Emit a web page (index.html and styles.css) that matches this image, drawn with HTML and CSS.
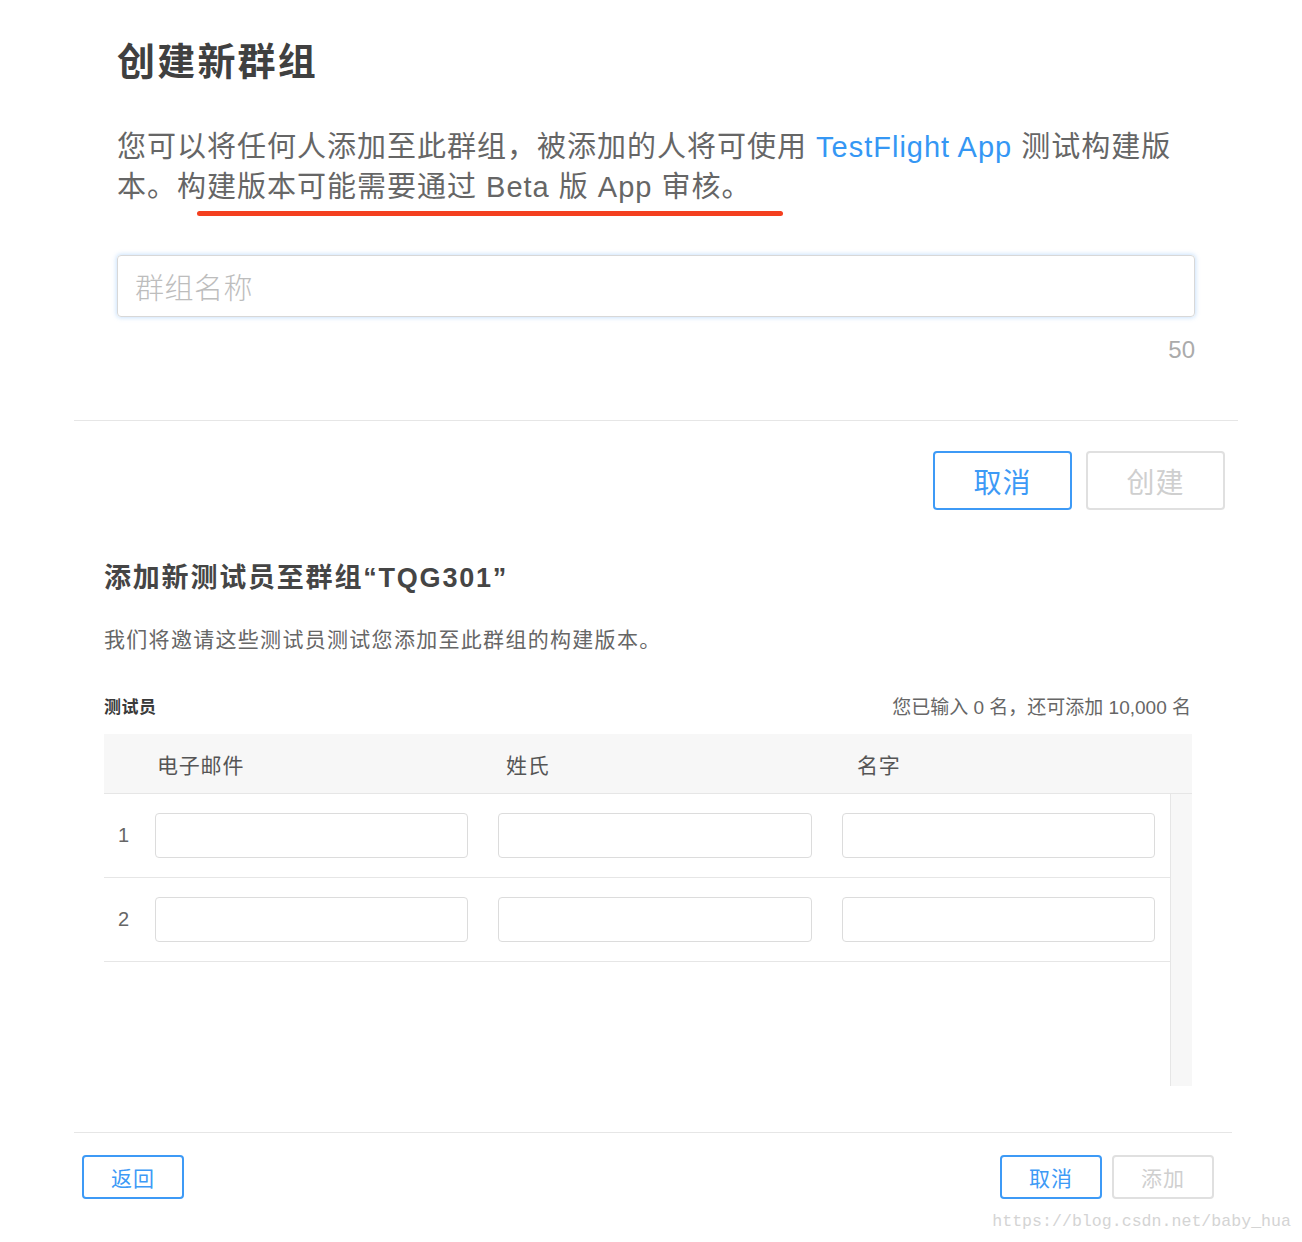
FILE: index.html
```html
<!DOCTYPE html>
<html lang="zh-CN">
<head>
<meta charset="utf-8">
<title>创建新群组</title>
<link rel="stylesheet" href="styles.css">
</head>
<body>
<div class="page">
  <section class="create">
    <h1 class="title">创建新群组</h1>
    <div class="intro-wrap">
      <p class="intro">您可以将任何人添加至此群组，被添加的人将可使用 <span class="link">TestFlight App</span> 测试构建版本。构建版本可能需要通过 Beta 版 App 审核。</p>
      <span class="mark"></span>
    </div>
    <div class="name-input"><span class="placeholder">群组名称</span></div>
    <div class="counter">50</div>
  </section>

  <hr class="divider divider-top">

  <div class="actions actions-top">
    <button class="btn btn-primary btn-lg">取消</button>
    <button class="btn btn-disabled btn-lg">创建</button>
  </div>

  <section class="testers">
    <h2 class="subtitle">添加新测试员至群组“TQG301”</h2>
    <p class="desc">我们将邀请这些测试员测试您添加至此群组的构建版本。</p>
    <div class="list-head">
      <span class="label">测试员</span>
      <span class="quota">您已输入 0 名，还可添加 10,000 名</span>
    </div>
    <div class="table">
      <div class="thead">
        <span class="th th-email">电子邮件</span>
        <span class="th th-last">姓氏</span>
        <span class="th th-first">名字</span>
      </div>
      <div class="tbody">
        <div class="rows">
          <div class="row">
            <span class="num">1</span>
            <div class="fields"><span class="field"></span><span class="field f-mid"></span><span class="field"></span></div>
          </div>
          <div class="row">
            <span class="num">2</span>
            <div class="fields"><span class="field"></span><span class="field f-mid"></span><span class="field"></span></div>
          </div>
        </div>
        <div class="scrolltrack"></div>
      </div>
    </div>
  </section>

  <hr class="divider divider-bottom">

  <div class="footer">
    <button class="btn btn-primary btn-sm">返回</button>
    <div class="footer-right">
      <button class="btn btn-primary btn-sm">取消</button>
      <button class="btn btn-disabled btn-sm">添加</button>
    </div>
  </div>

  <div class="watermark">https://blog.csdn.net/baby_hua</div>
</div>
</body>
</html>
```

FILE: styles.css
```css
* { box-sizing: border-box; }
html, body { margin: 0; padding: 0; background: #fff; }
body {
  font-family: "Liberation Sans", "Noto Sans CJK SC", sans-serif;
  color: #333;
}
.page {
  position: relative;
  width: 1302px;
  height: 1242px;
  overflow: hidden;
}

/* ---- create group ---- */
.create {
  padding: 38px 0 0 117px;
  width: 1195px;
}
.title {
  margin: 0;
  font-size: 38px;
  line-height: 48px;
  font-weight: 700;
  letter-spacing: 2.2px;
  color: #404040;
}
.intro-wrap {
  position: relative;
  margin-top: 41px;
}
.intro {
  margin: 0;
  font-size: 29px;
  line-height: 40px;
  letter-spacing: 1px;
  color: #666;
}
.link { color: #3597f4; }
.mark {
  position: absolute;
  left: 80px;
  top: 84px;
  width: 586px;
  height: 5px;
  border-radius: 3px;
  background: #f43f1f;
}
.name-input {
  margin-top: 48px;
  height: 62px;
  border: 1px solid #d8d8d8;
  border-radius: 4px;
  box-shadow: 0 0 4px 1px rgba(110, 175, 245, 0.35);
  display: flex;
  align-items: center;
  padding-left: 17px;
}
.placeholder {
  font-size: 29px;
  color: #bdbdbd;
  font-weight: 300;
  letter-spacing: 0.5px;
}
.counter {
  margin-top: 18px;
  text-align: right;
  font-size: 24px;
  line-height: 30px;
  color: #ababab;
}

.divider {
  border: 0;
  height: 1px;
  background: #e6e6e6;
  margin: 0;
}
.divider-top { margin: 55px 0 0 74px; width: 1164px; }
.divider-bottom { margin: 46px 0 0 74px; width: 1158px; }

/* ---- buttons ---- */
.btn {
  font-family: "Liberation Sans", "Noto Sans CJK SC", sans-serif;
  background: #fff;
  border-radius: 4px;
  padding: 0;
  cursor: pointer;
}
.btn-primary { border: 2px solid #3d9af6; color: #3d9af6; }
.btn-disabled { border: 2px solid #e0e0e0; color: #cfcfcf; }
.btn-lg { width: 139px; height: 59px; font-size: 28px; letter-spacing: 1px; }
.btn-sm { width: 102px; height: 44px; font-size: 21px; letter-spacing: 1px; }

.actions-top {
  margin-top: 30px;
  width: 1225px;
  display: flex;
  justify-content: flex-end;
  gap: 14px;
}

/* ---- testers ---- */
.testers {
  margin-left: 104px;
  width: 1088px;
  padding-top: 50px;
}
.subtitle {
  margin: 0;
  font-size: 27px;
  line-height: 36px;
  font-weight: 700;
  letter-spacing: 1.8px;
  color: #454545;
}
.desc {
  margin: 29px 0 0;
  font-size: 21px;
  line-height: 30px;
  letter-spacing: 1.3px;
  color: #666;
}
.list-head {
  margin-top: 38px;
  display: flex;
  justify-content: space-between;
  align-items: center;
  height: 24px;
  padding-right: 1px;
}
.label { font-size: 17px; font-weight: 700; color: #3a3a3a; letter-spacing: 0.5px; }
.quota { font-size: 19px; color: #666; }

.table { margin-top: 17px; }
.thead {
  height: 60px;
  background: #f7f7f7;
  border-bottom: 1px solid #e6e6e6;
  display: flex;
  align-items: center;
  font-size: 21px;
  color: #555;
  letter-spacing: 0.8px;
}
.th-email { margin-left: 53px; width: 349px; }
.th-last { width: 351px; }

.tbody {
  display: flex;
  height: 292px;
}
.rows { width: 1066px; }
.row {
  height: 84px;
  border-bottom: 1px solid #e6e6e6;
  display: flex;
  align-items: center;
}
.num {
  width: 51px;
  padding-left: 14px;
  font-size: 20px;
  color: #666;
}
.fields { display: flex; gap: 30px; }
.field {
  display: block;
  width: 313px;
  height: 45px;
  border: 1px solid #dcdcdc;
  border-radius: 4px;
  background: #fff;
}
.f-mid { width: 314px; }
.scrolltrack {
  width: 22px;
  background: #f7f7f7;
  border-left: 1px solid #e6e6e6;
}

/* ---- footer ---- */
.footer {
  margin: 22px 0 0 82px;
  width: 1132px;
  display: flex;
  justify-content: space-between;
}
.footer-right { display: flex; gap: 10px; }

.watermark {
  position: absolute;
  right: 11px;
  top: 1211px;
  font-family: "Liberation Mono", monospace;
  font-size: 16.6px;
  line-height: 22px;
  color: #d4d4d4;
}
```
